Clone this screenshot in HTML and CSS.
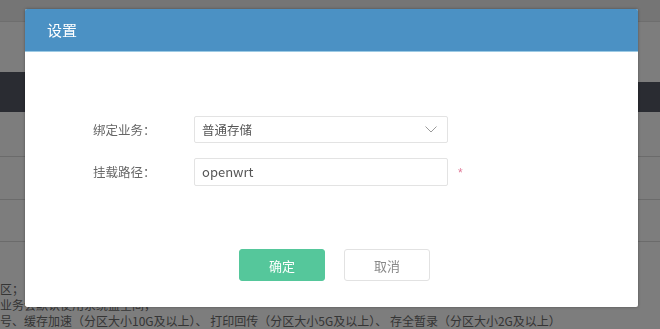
FILE: index.html
```html
<!DOCTYPE html>
<html lang="zh-CN">
<head>
<meta charset="utf-8">
<title>设置</title>
<link rel="stylesheet" href="styles.css">
</head>
<body>
<div class="page">
  <div class="topbar"></div>
  <div class="subbar"></div>
  <div class="band">
    <div class="band-left"></div>
    <div class="band-right"></div>
  </div>
  <div class="row row-a"></div>
  <div class="row row-b"></div>
  <div class="row row-c"></div>
  <div class="notes">
    <p>区；</p>
    <p>业务会默认使用系统盘空间，</p>
    <p>号、缓存加速（分区大小10G及以上）、 打印回传（分区大小5G及以上）、 存全暂录（分区大小2G及以上）</p>
  </div>
</div>

<div class="overlay"></div>

<div class="modal">
  <div class="modal-header">设置</div>
  <div class="modal-body">
    <div class="form">
      <div class="form-row">
        <label class="label">绑定业务：</label>
        <div class="field select">
          <span>普通存储</span>
          <svg class="chev" width="12" height="7" viewBox="0 0 12 7"><path d="M0.5 0.5 L6 6 L11.5 0.5" fill="none" stroke="#9a9a9a" stroke-width="1"/></svg>
        </div>
      </div>
      <div class="form-row">
        <label class="label">挂载路径：</label>
        <div class="field input"><span>openwrt</span></div>
        <span class="req">*</span>
      </div>
    </div>
    <div class="actions">
      <button class="btn btn-ok">确定</button>
      <button class="btn btn-cancel">取消</button>
    </div>
  </div>
</div>
</body>
</html>
```

FILE: styles.css
```css
* { box-sizing: border-box; }
html, body {
  margin: 0;
  padding: 0;
  width: 660px;
  height: 329px;
  overflow: hidden;
  font-family: "Noto Sans CJK SC", "Noto Sans", sans-serif;
}
.page {
  width: 660px;
  height: 329px;
  background: #fbfbfb;
  display: flex;
  flex-direction: column;
}
.topbar { height: 22px; background: #eaeaea; border-bottom: 1px solid #dcdcdc; flex: none; }
.subbar { height: 50px; flex: none; }
.band { height: 40px; display: flex; align-items: flex-end; flex: none; }
.band-left { width: 220px; height: 40px; background: #555864; }
.band-right { flex: 1; height: 30px; background: #555864; }
.row { border-bottom: 1px solid #d6d6d6; flex: none; }
.row-a { height: 45px; }
.row-b { height: 43px; }
.row-c { height: 42px; }
.notes {
  padding-top: 39px;
  font-size: 12px;
  line-height: 16px;
  color: #6a6a6a;
}
.notes p { margin: 0; white-space: nowrap; }

.overlay {
  position: fixed;
  inset: 0;
  background: rgba(0, 0, 0, 0.5);
}

.modal {
  position: absolute;
  left: 25px;
  top: 9px;
  width: 613px;
  height: 298px;
  background: #fff;
  border-radius: 2px;
  box-shadow: 0 0 3px rgba(0, 0, 0, 0.35);
  display: flex;
  flex-direction: column;
}
.modal-header {
  height: 43px;
  background: #4b91c4;
  border-bottom: 1px solid #9ccae4;
  color: #fff;
  font-size: 15px;
  line-height: 42px;
  padding-left: 22px;
  border-radius: 2px 2px 0 0;
}
.modal-body {
  flex: 1;
  display: flex;
  flex-direction: column;
  padding-top: 64px;
}
.form { display: flex; flex-direction: column; gap: 15px; padding-left: 68px; }
.form-row { display: flex; align-items: center; height: 27px; }
.label {
  width: 101px;
  font-size: 12.5px;
  color: #666;
}
.field {
  width: 254px;
  height: 27px;
  border: 1px solid #e3e3e3;
  border-radius: 2px;
  display: flex;
  align-items: center;
  justify-content: space-between;
  padding: 0 6px 0 7px;
  font-size: 12.5px;
  color: #555;
}
.input { height: 28px; font-size: 13px; }
.chev { margin-right: 4px; }
.req {
  margin-left: 10px;
  color: #e07a98;
  font-size: 12px;
  font-family: "Liberation Sans", sans-serif;
  padding-top: 2px;
}
.actions {
  display: flex;
  justify-content: center;
  gap: 19px;
  padding-left: 6px;
  margin-top: 64px;
}
.btn {
  width: 86px;
  height: 32px;
  border-radius: 3px;
  font-family: "Noto Sans CJK SC", sans-serif;
  font-size: 13px;
  cursor: pointer;
}
.btn-ok { background: #55c79b; border: 1px solid #55c79b; color: #fff; }
.btn-cancel { background: #fff; border: 1px solid #e2e2e2; color: #888; }
```
